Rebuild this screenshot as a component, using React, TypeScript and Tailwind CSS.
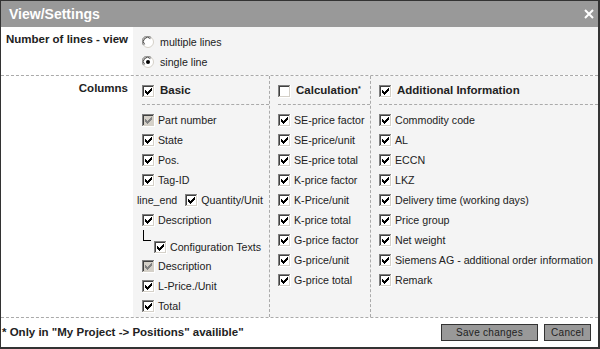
import React from "react";

const CHECK_PIXELS: [number, number, number][] = [
  [6, 0, 1],
  [5, 1, 2],
  [0, 2, 1],
  [4, 2, 3],
  [0, 3, 2],
  [3, 3, 3],
  [0, 4, 5],
  [1, 5, 3],
  [2, 6, 1],
];

function Checkbox({ checked = true, disabled = false }: { checked?: boolean; disabled?: boolean }) {
  const fill = disabled ? "#d4d0c8" : "#fff";
  const mark = disabled ? "#808080" : "#000";
  return (
    <svg width="13" height="13" viewBox="0 0 13 13" shapeRendering="crispEdges" className="shrink-0">
      <rect x="0" y="0" width="13" height="13" fill="#fff" />
      <rect x="0" y="0" width="12" height="1" fill="#808080" />
      <rect x="0" y="0" width="1" height="12" fill="#808080" />
      <rect x="1" y="1" width="10" height="1" fill="#404040" />
      <rect x="1" y="1" width="1" height="10" fill="#404040" />
      <rect x="1" y="11" width="11" height="1" fill="#d4d0c8" />
      <rect x="11" y="1" width="1" height="11" fill="#d4d0c8" />
      <rect x="2" y="2" width="9" height="9" fill={fill} />
      {checked &&
        CHECK_PIXELS.map(([x, y, w], i) => (
          <rect key={i} x={3 + x} y={3 + y} width={w} height="1" fill={mark} />
        ))}
    </svg>
  );
}

function Radio({ checked = false }: { checked?: boolean }) {
  return (
    <svg width="12" height="12" viewBox="0 0 12 12" className="shrink-0">
      <circle cx="6" cy="6" r="5.5" fill="#fff" stroke="#d4d0c8" />
      <path d="M1.6 9.2 A5 5 0 0 1 9.2 1.6" fill="none" stroke="#808080" />
      <path d="M2.6 8.4 A4 4 0 0 1 8.4 2.6" fill="none" stroke="#404040" />
      {checked && <circle cx="6" cy="6" r="2" fill="#000" />}
    </svg>
  );
}

function Item({ label, disabled = false }: { label: string; disabled?: boolean }) {
  return (
    <div className="flex h-[20px] items-center gap-[3px]">
      <Checkbox disabled={disabled} />
      <span>{label}</span>
    </div>
  );
}

function Header({ children, checked = true }: { children: React.ReactNode; checked?: boolean }) {
  return (
    <div className="flex h-[29px] items-center gap-[5px] border-b border-dashed border-[#aaa] pt-[2px] text-[11.5px] font-bold">
      <Checkbox checked={checked} />
      <span>{children}</span>
    </div>
  );
}

const calculation = [
  "SE-price factor",
  "SE-price/unit",
  "SE-price total",
  "K-price factor",
  "K-Price/unit",
  "K-price total",
  "G-price factor",
  "G-price/unit",
  "G-price total",
];

const additional = [
  "Commodity code",
  "AL",
  "ECCN",
  "LKZ",
  "Delivery time (working days)",
  "Price group",
  "Net weight",
  "Siemens AG - additional order information",
  "Remark",
];

export default function App() {
  return (
    <div className="flex h-[349px] w-[600px] flex-col border-t border-l border-r-2 border-b-2 border-[#333] font-['Liberation_Sans',Arial,sans-serif] text-[10.67px] text-[#222]">
      {/* title bar */}
      <div className="flex h-[26px] shrink-0 items-center justify-between bg-[#999] pl-[8px] pr-[4px]">
        <span className="text-[14px] font-bold text-white">View/Settings</span>
        <svg width="10" height="10" viewBox="0 0 10 10">
          <path d="M1 1 L9 9 M9 1 L1 9" stroke="#fff" strokeWidth="2" />
        </svg>
      </div>

      {/* number of lines */}
      <div className="flex h-[49px] shrink-0 border-b border-dashed border-[#aaa]">
        <div className="w-[132px] bg-white pt-[5px] pr-[5px] text-right text-[11.5px] leading-[14px] font-bold">
          Number of lines - view
        </div>
        <div className="flex-1 bg-[#f4f4f4] pt-[5px] pl-[9px]">
          <div className="flex h-[20px] items-center gap-[6px]">
            <Radio />
            <span>multiple lines</span>
          </div>
          <div className="flex h-[20px] items-center gap-[6px]">
            <Radio checked />
            <span>single line</span>
          </div>
        </div>
      </div>

      {/* columns */}
      <div className="flex h-[242px] shrink-0 border-b border-dashed border-[#aaa]">
        <div className="w-[132px] bg-white pt-[5px] pr-[5px] text-right text-[11.5px] leading-[14px] font-bold">
          Columns
        </div>
        <div className="flex flex-1 bg-[#f4f4f4]">
          <div className="w-[136px]">
            <div className="pl-[9px]">
              <Header>Basic</Header>
            </div>
            <div className="pt-[5px] pl-[9px]">
              <Item label="Part number" disabled />
              <Item label="State" />
              <Item label="Pos." />
              <Item label="Tag-ID" />
              <div className="-ml-[5px] flex h-[20px] items-center">
                <span>line_end</span>
                <span className="ml-[8px] flex items-center gap-[3px]">
                  <Checkbox />
                  <span>Quantity/Unit</span>
                </span>
              </div>
              <Item label="Description" />
              <div className="flex h-[26px] items-start">
                <div className="ml-[1px] h-[11px] w-[8px] border-b border-l border-black" />
                <div className="mt-[9px] ml-[3px] flex items-center gap-[3px]">
                  <Checkbox />
                  <span>Configuration Texts</span>
                </div>
              </div>
              <Item label="Description" disabled />
              <Item label="L-Price./Unit" />
              <Item label="Total" />
            </div>
          </div>
          <div className="w-[101px] border-l border-dashed border-[#aaa]">
            <div className="pl-[8px]">
              <Header checked={false}>
                Calculation<sup className="text-[7px]">*</sup>
              </Header>
            </div>
            <div className="pt-[5px] pl-[8px]">
              {calculation.map((c) => (
                <Item key={c} label={c} />
              ))}
            </div>
          </div>
          <div className="flex-1 border-l border-dashed border-[#aaa]">
            <div className="pl-[8px]">
              <Header>Additional Information</Header>
            </div>
            <div className="pt-[5px] pl-[8px]">
              {additional.map((c) => (
                <Item key={c} label={c} />
              ))}
            </div>
          </div>
        </div>
      </div>

      {/* footer */}
      <div className="flex flex-1 items-center justify-between bg-white pl-[1px] pr-[7px]">
        <span className="text-[11.5px] font-bold">* Only in "My Project -&gt; Positions" availible"</span>
        <div className="flex gap-[6px]">
          <button className="h-[17px] w-[97px] border border-[#333] bg-[#999] text-[10px] tracking-[0.3px] text-[#222]">
            Save changes
          </button>
          <button className="h-[17px] w-[47px] border border-[#333] bg-[#999] text-[10px] tracking-[0.3px] text-[#222]">
            Cancel
          </button>
        </div>
      </div>
    </div>
  );
}
